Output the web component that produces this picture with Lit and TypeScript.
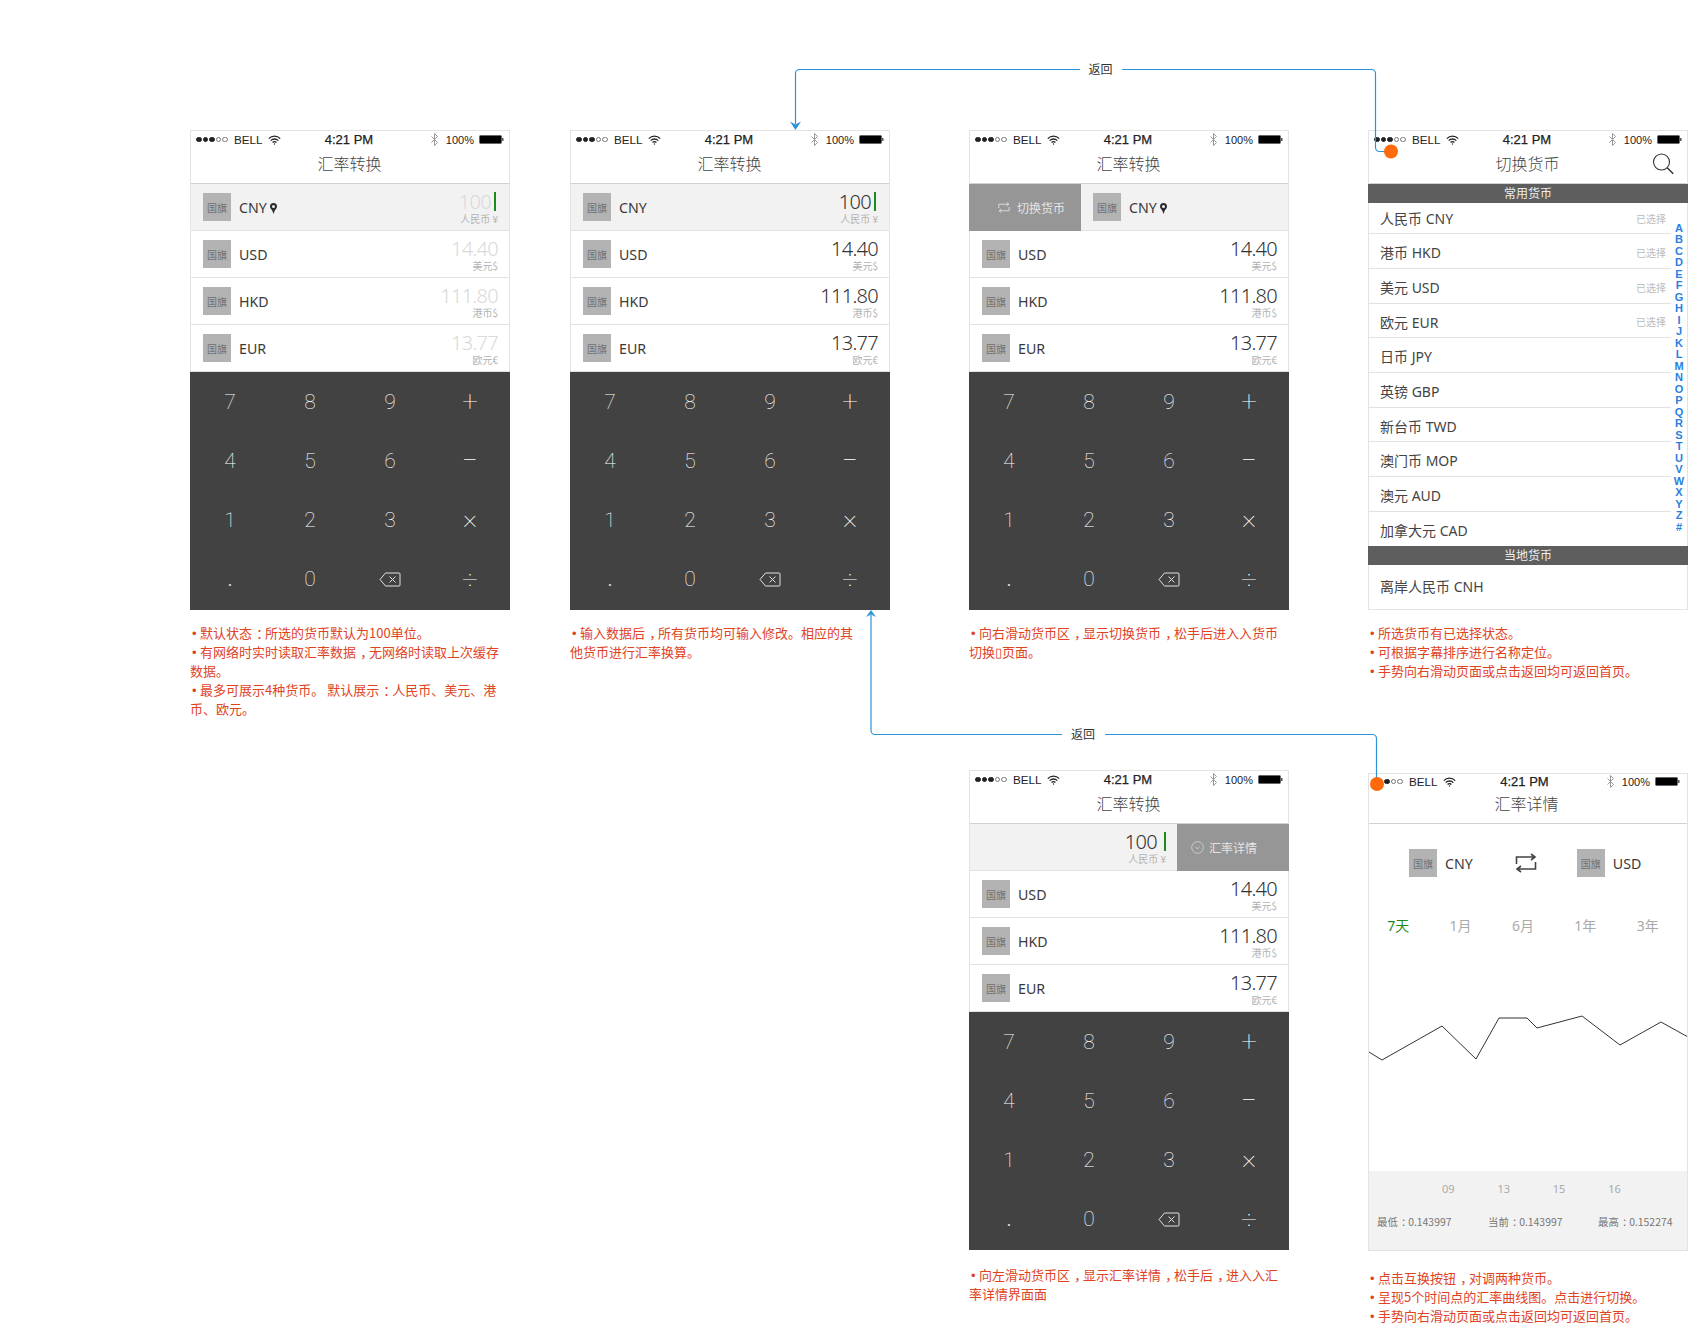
import { LitElement, html, svg, css, nothing } from 'lit';
import { customElement } from 'lit/decorators.js';

interface Rate {
  code: string;
  value: string;
  label: string;
}

const RATES: Rate[] = [
  { code: 'USD', value: '14.40', label: '美元$' },
  { code: 'HKD', value: '111.80', label: '港币$' },
  { code: 'EUR', value: '13.77', label: '欧元€' },
];

const COMMON = [
  ['人民币 CNY', true],
  ['港币 HKD', true],
  ['美元 USD', true],
  ['欧元 EUR', true],
  ['日币 JPY', false],
  ['英镑 GBP', false],
  ['新台币 TWD', false],
  ['澳门币 MOP', false],
  ['澳元 AUD', false],
  ['加拿大元 CAD', false],
] as const;

const KEYS = ['7', '8', '9', '+', '4', '5', '6', '−', '1', '2', '3', '×', '.', '0', 'back', '÷'];
const LETTERS = 'ABCDEFGHIJKLMNOPQRSTUVWXYZ#'.split('');
const TABS = ['7天', '1月', '6月', '1年', '3年'];

// chart points, relative to the chart's top left corner
const CURVE =
  '0,116 13,124 73,90 107,123 130,82 158,82 168,92 213,80 251,109 292,86 319,101';

const pin = html`<svg class="pin" width="7" height="11" viewBox="0 0 7 11">
  <path fill="#2a2a33" fill-rule="evenodd" d="M3.5 0A3.5 3.5 0 0 1 7 3.5C7 5.6 5 6.6 4.6 8L3.5 11 2.4 8C2 6.6 0 5.6 0 3.5A3.5 3.5 0 0 1 3.5 0zM3.5 2a1.5 1.5 0 1 0 0 3 1.5 1.5 0 0 0 0-3z"/>
</svg>`;

const swapPaths = svg`<path d="M1.5 11V4h18M16 1l4 3-4 3M20.5 9v7h-18M6 13l-4 3 4 3" fill="none" stroke="currentColor" stroke-width="1.6"/>`;

// the reference sets ， and ： in the middle of their em box
const punct = (text: string) =>
  text.split(/([，：])/).map((part) => (part === '，' || part === '：' ? html`<span class="mid">${part}</span>` : part));

@customElement('app-root')
export class AppRoot extends LitElement {
  static styles = css`
    :host {
      display: block;
      font-family: 'Noto Sans', 'Noto Sans CJK SC', sans-serif;
    }

    .canvas {
      position: relative;
      box-sizing: border-box;
      width: 1698px;
      height: 1334px;
      padding-top: 130px;
      display: grid;
      grid-template-columns: 190px 320px 60px 320px 79px 320px 79px 320px;
      grid-template-rows: 640px auto;
      overflow: hidden;
      background: #fff;
    }

    .col-1 { grid-column: 2; }
    .col-2 { grid-column: 4; }
    .col-3 { grid-column: 6; }
    .col-4 { grid-column: 8; }
    .row-2 { grid-row: 2; }

    .links {
      position: absolute;
      inset: 0;
      pointer-events: none;
    }

    .links text {
      font: 12px 'Noto Sans CJK SC', sans-serif;
      fill: #333;
      text-anchor: middle;
    }

    /* Phone frame */
    .phone {
      box-sizing: border-box;
      width: 320px;
      height: 480px;
      border: 1px solid #e3e3e3;
      display: flex;
      flex-direction: column;
      background: #fff;
      position: relative;
    }

    .status {
      flex: none;
      box-sizing: border-box;
      height: 19px;
      display: grid;
      grid-template-columns: 1fr auto 1fr;
      align-items: center;
      padding: 0 5px 2px 5px;
      font: 11.7px 'Liberation Sans', sans-serif;
      color: #222;
    }

    .status-left, .status-right {
      display: flex;
      align-items: center;
    }

    .status-right {
      justify-content: flex-end;
    }

    .signal {
      display: flex;
      gap: 1px;
      width: 38px;
    }

    .signal i {
      box-sizing: border-box;
      width: 5.6px;
      height: 5.6px;
      border-radius: 50%;
      border: 1px solid #222;
      background: #222;
    }

    .signal i.off {
      background: none;
      border-color: #777;
      border-width: 0.7px;
    }

    .carrier { margin-right: 5px; }

    .time {
      margin-left: -2px;
      font-size: 13px;
      -webkit-text-stroke: 0.25px #222;
    }

    .bt { margin-right: 8px; }

    .pct {
      font-size: 11px;
      margin-right: 5px;
    }

    .head {
      flex: none;
      box-sizing: border-box;
      height: 34px;
      border-bottom: 1px solid #d2d2d2;
      display: grid;
      grid-template-columns: 1fr auto 1fr;
      font-size: 16px;
      font-weight: 300;
      font-family: 'Noto Sans CJK SC', sans-serif;
      line-height: 26px;
      color: #444;
    }

    .head .title {
      grid-column: 2;
      margin-left: -1px;
    }

    .search {
      justify-self: end;
      margin: 3px 13px 0 0;
    }

    /* Currency rows */
    .row {
      flex: none;
      box-sizing: border-box;
      height: 47px;
      border-bottom: 1px solid #e3e3e3;
      display: flex;
      align-items: center;
      padding: 0 11px 0 12px;
    }

    .row.on { background: #f2f2f2; }

    .row.split { padding: 0; }

    .flag {
      flex: none;
      width: 28px;
      height: 28px;
      background: #b3b3b3;
      display: flex;
      align-items: center;
      justify-content: center;
      font: 10px 'Noto Sans CJK SC', sans-serif;
      color: #707070;
    }

    .code {
      margin: 1px 0 0 8px;
      font-size: 14.2px;
      color: #3a3a3a;
    }

    .pin { margin: 2px 0 0 3px; }

    .amount {
      margin-left: auto;
      display: flex;
      flex-direction: column;
      align-items: flex-end;
    }

    .value {
      display: flex;
      align-items: center;
      height: 23px;
      margin-top: 1px;
      font-size: 20px;
      font-weight: 300;
      letter-spacing: -0.7px;
      color: #333;
    }

    .faded .value { color: #d9d9d9; }

    .caret {
      width: 2px;
      height: 19px;
      background: #1d8a1d;
      margin: 0 2px 0 3px;
    }

    .gap .caret { margin: 0 0 0 7px; }

    .label {
      font: 10px/12px 'Noto Sans CJK SC', sans-serif;
      color: #b3b3b3;
    }

    .action {
      flex: none;
      align-self: stretch;
      width: 112px;
      background: #969696;
      display: flex;
      align-items: center;
      color: #e4e4e4;
      font: 12px 'Noto Sans CJK SC', sans-serif;
      gap: 7px;
    }

    .action.left {
      margin-left: -1px;
      margin-bottom: -1px;
      padding-left: 29px;
      box-sizing: border-box;
    }

    .action.right {
      margin-right: -1px;
      margin-bottom: -1px;
      padding-left: 14px;
      box-sizing: border-box;
      gap: 5px;
    }

    .left + .flag { margin-left: 12px; }

    .row.split .amount { padding-right: 11px; }

    /* Keypad */
    .keys {
      flex: 1;
      margin: 0 -1px -1px;
      padding-bottom: 1px;
      background: #424242;
      display: grid;
      grid-template-columns: repeat(4, 1fr);
      grid-template-rows: repeat(4, 1fr);
      align-items: center;
      justify-items: center;
      font: 100 21px Roboto, sans-serif;
      color: #fff;
    }

    .keys .op { font-size: 28px; }

    .keys .times { margin-bottom: 5px; }

    .keys .dot {
      font-weight: 400;
      font-size: 19px;
      color: #ddd;
    }

    /* Currency list */
    .section {
      flex: none;
      height: 19px;
      margin: 0 -1px;
      background: #5e5e5e;
      color: #eee;
      font: 12px/18px 'Noto Sans CJK SC', sans-serif;
      text-align: center;
    }

    .items {
      flex: none;
      margin-right: 16px;
    }

    .item {
      box-sizing: border-box;
      height: 34.67px;
      padding: 2.5px 5px 0 11px;
      border-bottom: 1px solid #e3e3e3;
      display: flex;
      align-items: center;
      justify-content: space-between;
      font-size: 14px;
      color: #444;
    }

    .item:first-child {
      height: 31.3px;
      padding-top: 0;
    }

    .item:last-child { border-bottom: none; }

    .item small {
      font-size: 10px;
      color: #bbb;
    }

    .item.local {
      flex: 1;
      border: none;
      padding: 0 11px 2px;
      justify-content: flex-start;
    }

    .index {
      position: absolute;
      top: 91.5px;
      right: 0;
      width: 16px;
      text-align: center;
      font: bold 11px/11.5px 'Liberation Sans', sans-serif;
      color: #2a7fe0;
    }

    /* Detail screen */
    .phone.detail {
      height: 478px;
      margin-top: 3px;
    }

    .detail .status {
      height: 16px;
      padding: 0 7px 3px 2px;
    }

    .detail .head { padding-right: 2px; }

    .pair {
      flex: none;
      display: flex;
      align-items: center;
      height: 28px;
      margin-top: 25px;
      padding-left: 40px;
    }

    .pair .swap {
      margin: 0 40px 0 42px;
      color: #444;
    }

    .tabs {
      flex: none;
      display: grid;
      grid-template-columns: repeat(5, 62.4px);
      justify-items: center;
      margin: 39px 0 0 -2px;
      font-size: 14px;
      line-height: 20px;
      color: #aaa;
    }

    .tabs .active { color: #1d8a1d; }

    .chart {
      flex: none;
      display: block;
      height: 235px;
    }

    .foot {
      flex: 1;
      background: #f2f2f2;
      font: 10.4px 'Noto Sans CJK SC', sans-serif;
    }

    .axis {
      display: flex;
      padding: 10px 0 0 73px;
      font: 11px/16px 'Noto Sans', sans-serif;
      color: #aaa;
    }

    .axis span { width: 55.4px; }

    .stats {
      display: grid;
      grid-template-columns: 111px 110px auto;
      padding: 17px 0 0 8px;
      line-height: 16px;
      color: #777;
      white-space: nowrap;
    }

    .mid {
      padding-left: 0.32em;
      margin-right: -0.32em;
    }

    /* Notes under each screen */
    .notes {
      margin-top: 13px;
      font: 13px/19px 'Noto Sans CJK SC', sans-serif;
      color: #e0431f;
    }

    .note { white-space: pre; }

    .note b {
      font: 13px 'Liberation Sans', sans-serif;
      display: inline-block;
      width: 10px;
      text-indent: 2px;
    }
  `;

  private renderStatus() {
    return html`<div class="status">
      <div class="status-left">
        <div class="signal"><i></i><i></i><i></i><i class="off"></i><i class="off"></i></div>
        <span class="carrier">BELL</span>
        <svg width="13" height="10" viewBox="0 0 13 10" fill="none" stroke="#222" stroke-width="1.3">
          <path d="M.8 3.6a8 8 0 0 1 11.4 0M2.7 5.6a5.3 5.3 0 0 1 7.6 0M4.6 7.5a2.6 2.6 0 0 1 3.8 0"/>
          <circle cx="6.5" cy="9" r=".7" fill="#222" stroke="none"/>
        </svg>
      </div>
      <span class="time">4:21 PM</span>
      <div class="status-right">
        <svg class="bt" width="7" height="13" viewBox="0 0 7 13" fill="none" stroke="#999">
          <path d="M.5 3.5l6 6-3 3V.5l3 3-6 6"/>
        </svg>
        <span class="pct">100%</span>
        <svg width="25" height="9" viewBox="0 0 25 9">
          <rect x=".5" y=".5" width="22" height="8" rx="1" fill="#000" stroke="#666"/>
          <rect x="23" y="3" width="1.5" height="3" fill="#555"/>
        </svg>
      </div>
    </div>`;
  }

  private renderHead(title: string, search = false) {
    return html`<div class="head">
      <span class="title">${title}</span>
      ${search
        ? html`<svg class="search" width="22" height="22" viewBox="0 0 22 22" fill="none" stroke="#333" stroke-width="1.1">
            <circle cx="9.5" cy="9" r="8"/>
            <path d="M15.2 14.8l6 6" stroke-width="1.5"/>
          </svg>`
        : nothing}
    </div>`;
  }

  private keyClass(key: string, i: number) {
    if (key === '.') return 'dot';
    if (key === '×') return 'op times';
    return i % 4 === 3 ? 'op' : '';
  }

  private renderKeys() {
    return html`<div class="keys">
      ${KEYS.map((key, i) =>
        key === 'back'
          ? html`<svg width="22" height="15" viewBox="0 0 22 15" fill="none" stroke="#e2e2e2">
              <path d="M6.5 1H20a1 1 0 0 1 1 1v11a1 1 0 0 1-1 1H6.5L1 7.5z" stroke-linejoin="round"/>
              <path d="M10.5 4.5l6 6M16.5 4.5l-6 6"/>
            </svg>`
          : html`<span class=${this.keyClass(key, i)}>${key}</span>`
      )}
    </div>`;
  }

  private renderAmount(rate: { value: string; label: string }, caret = false) {
    return html`<div class="amount">
      <div class="value">${rate.value}${caret ? html`<span class="caret"></span>` : nothing}</div>
      <div class="label">${rate.label}</div>
    </div>`;
  }

  private renderRates() {
    return RATES.map(
      (rate) => html`<div class="row">
        <div class="flag">国旗</div>
        <span class="code">${rate.code}</span>
        ${this.renderAmount(rate)}
      </div>`
    );
  }

  private renderBase(faded: boolean, withPin: boolean) {
    return html`<div class="phone ${faded ? 'faded' : ''}">
      ${this.renderStatus()} ${this.renderHead('汇率转换')}
      <div class="row on">
        <div class="flag">国旗</div>
        <span class="code">CNY</span>
        ${withPin ? pin : nothing}
        ${this.renderAmount({ value: '100', label: '人民币 ¥' }, true)}
      </div>
      ${this.renderRates()} ${this.renderKeys()}
    </div>`;
  }

  private renderSwipeRight() {
    return html`<div class="phone">
      ${this.renderStatus()} ${this.renderHead('汇率转换')}
      <div class="row on split">
        <div class="action left">
          <svg width="12" height="11" viewBox="0 0 22 20">${swapPaths}</svg>
          切换货币
        </div>
        <div class="flag">国旗</div>
        <span class="code">CNY</span>
        ${pin}
      </div>
      ${this.renderRates()} ${this.renderKeys()}
    </div>`;
  }

  private renderSwipeLeft() {
    return html`<div class="phone">
      ${this.renderStatus()} ${this.renderHead('汇率转换')}
      <div class="row on split gap">
        ${this.renderAmount({ value: '100', label: '人民币 ¥' }, true)}
        <div class="action right">
          <svg width="13" height="13" viewBox="0 0 13 13" fill="none" stroke="#d8d8d8" stroke-width=".8">
            <circle cx="6.5" cy="6.5" r="5.8"/>
            <path d="M4.5 6l1.6 1.8L8.5 6"/>
          </svg>
          汇率详情
        </div>
      </div>
      ${this.renderRates()} ${this.renderKeys()}
    </div>`;
  }

  private renderList() {
    return html`<div class="phone">
      ${this.renderStatus()} ${this.renderHead('切换货币', true)}
      <div class="section">常用货币</div>
      <div class="items">
        ${COMMON.map(
          ([name, picked]) => html`<div class="item">
            <span>${name}</span>
            ${picked ? html`<small>已选择</small>` : nothing}
          </div>`
        )}
      </div>
      <div class="section">当地货币</div>
      <div class="item local"><span>离岸人民币 CNH</span></div>
      <div class="index">${LETTERS.map((l) => html`<div>${l}</div>`)}</div>
    </div>`;
  }

  private renderDetail() {
    return html`<div class="phone detail">
      ${this.renderStatus()} ${this.renderHead('汇率详情')}
      <div class="pair">
        <div class="flag">国旗</div>
        <span class="code">CNY</span>
        <svg class="swap" width="22" height="20" viewBox="0 0 22 20">${swapPaths}</svg>
        <div class="flag">国旗</div>
        <span class="code">USD</span>
      </div>
      <div class="tabs">
        ${TABS.map((t, i) => html`<span class=${i === 0 ? 'active' : ''}>${t}</span>`)}
      </div>
      <svg class="chart" width="318" height="235" viewBox="0 0 318 235">
        <polyline points=${CURVE} fill="none" stroke="#333" stroke-width="1"/>
      </svg>
      <div class="foot">
        <div class="axis"><span>09</span><span>13</span><span>15</span><span>16</span></div>
        <div class="stats">
          <span>${punct('最低：0.143997')}</span>
          <span>${punct('当前：0.143997')}</span>
          <span>${punct('最高：0.152274')}</span>
        </div>
      </div>
    </div>`;
  }

  private renderNotes(items: string[], top?: number) {
    return html`<div class="notes" style=${top ? `margin-top:${top}px` : ''}>
      ${items.map((text) => html`<div class="note"><b>•</b>${punct(text)}</div>`)}
    </div>`;
  }

  private renderLinks() {
    return html`<svg class="links" width="1698" height="1334" viewBox="0 0 1698 1334">
      <g fill="none" stroke="#2a93d9" stroke-width="1.2">
        <path d="M1385 151.5h-5.5a4 4 0 0 1-4-4V73.5a4 4 0 0 0-4-4H1122"/>
        <path d="M1080 69.5H799.5a4 4 0 0 0-4 4V124"/>
        <path d="M1376.5 784V738.5a4 4 0 0 0-4-4H1105"/>
        <path d="M1062 734.5H875a4 4 0 0 1-4-4V615"/>
      </g>
      <path d="M795.5 130l-5.5-8.5 5.5 3 5.5-3z" fill="#2a93d9"/>
      <path d="M871 610l-5 7 5-2.5 5 2.5z" fill="#2a93d9"/>
      <circle cx="1391" cy="151.5" r="7" fill="#ff6a0c"/>
      <circle cx="1377" cy="784" r="7" fill="#ff6a0c"/>
      <text x="1100.5" y="73.5">返回</text>
      <text x="1083" y="738.5">返回</text>
    </svg>`;
  }

  render() {
    return html`<div class="canvas">
      <section class="col-1">
        ${this.renderBase(true, true)}
        ${this.renderNotes([
          '默认状态：所选的货币默认为100单位。',
          '有网络时实时读取汇率数据，无网络时读取上次缓存\n数据。',
          '最多可展示4种货币。 默认展示：人民币、美元、港\n币、欧元。',
        ])}
      </section>
      <section class="col-2">
        ${this.renderBase(false, false)}
        ${this.renderNotes(['输入数据后，所有货币均可输入修改。相应的其\n他货币进行汇率换算。'])}
      </section>
      <section class="col-3">
        ${this.renderSwipeRight()}
        ${this.renderNotes(['向右滑动货币区，显示切换货币，松手后进入入货币\n切换▯页面。'])}
      </section>
      <section class="col-4">
        ${this.renderList()}
        ${this.renderNotes([
          '所选货币有已选择状态。',
          '可根据字幕排序进行名称定位。',
          '手势向右滑动页面或点击返回均可返回首页。',
        ])}
      </section>
      <section class="col-3 row-2">
        ${this.renderSwipeLeft()}
        ${this.renderNotes(['向左滑动货币区，显示汇率详情，松手后，进入入汇\n率详情界面面'], 15)}
      </section>
      <section class="col-4 row-2">
        ${this.renderDetail()}
        ${this.renderNotes(
          [
            '点击互换按钮，对调两种货币。',
            '呈现5个时间点的汇率曲线图。点击进行切换。',
            '手势向右滑动页面或点击返回均可返回首页。',
          ],
          17
        )}
      </section>
      ${this.renderLinks()}
    </div>`;
  }
}

declare global {
  interface HTMLElementTagNameMap {
    'app-root': AppRoot;
  }
}
